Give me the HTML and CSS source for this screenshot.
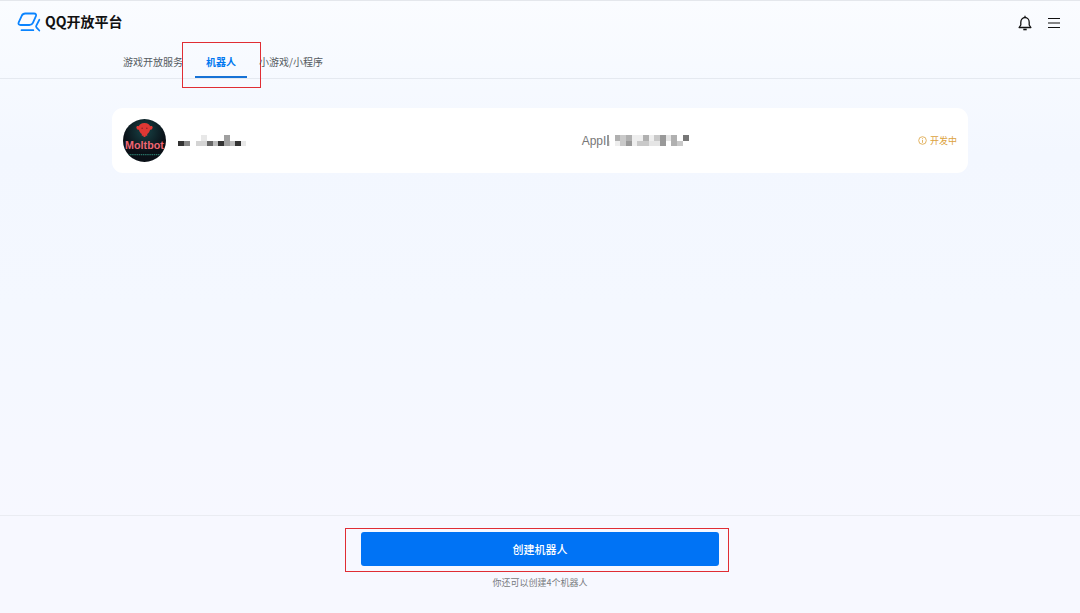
FILE: index.html
```html
<!DOCTYPE html>
<html lang="zh-CN">
<head>
    <meta charset="UTF-8">
    <meta name="viewport" content="width=device-width, initial-scale=1.0">
    <title>QQ开放平台</title>
    <link rel="stylesheet" href="styles.css">
</head>
<body>
    <header>
        <a class="logo" href="#">
            <svg width="24" height="20" viewBox="0 0 24 20" fill="none" stroke="#0a84ff" stroke-width="1.8" stroke-linecap="round" stroke-linejoin="round">
                <path d="M8.3 1.5h8.6c1.900 0 2.700 1.200 2 2.700l-3 6.600c-.7 1.500-2 2.200-3.600 2.200H3.600c-1.800 0-2.600-1.100-1.900-2.600l3-6.600c.7-1.600 1.900-2.300 3.600-2.300z"/>
                <path d="M4.500 18.200h11.800"/>
                <path d="M22.300 7.800l-3 5.900c-.4.800-.3 1.300.3 1.900l2.700 2.900"/>
            </svg>
            <span>QQ开放平台</span>
        </a>
        <div class="tools">
            <button type="button" aria-label="通知">
                <svg width="14" height="16" viewBox="0 0 14 16" fill="none" stroke="#111" stroke-width="1.3" stroke-linejoin="round">
                    <path d="M7 .8v1.5M2.800 10V7.200a4.200 4.700 0 0 1 8.400 0V10l1.700 2.500H1.100L2.800 10z"/>
                    <path d="M5.300 14.500h3.400" stroke-width="1.6"/>
                </svg>
            </button>
            <button type="button" aria-label="菜单">
                <svg width="12" height="12" viewBox="0 0 12 12" stroke="#111" stroke-width="1.2">
                    <path d="M0 1.500h12M0 6h12M0 10.500h12"/>
                </svg>
            </button>
        </div>
    </header>

    <nav class="tabs">
        <a class="tab" href="#">游戏开放服务</a>
        <a class="tab active" href="#">机器人<span class="mark"></span></a>
        <a class="tab" href="#">小游戏/小程序</a>
    </nav>

    <main>
        <div class="bot-card">
            <div class="bot-name">
                <svg class="avatar" width="43" height="43" viewBox="0 0 44 44" role="img" aria-label="Moltbot">
                    <defs>
                        <radialGradient id="glow" cx="50%" cy="28%" r="50%">
                            <stop offset="0" stop-color="#174346"/>
                            <stop offset="1" stop-color="#0a1017"/>
                        </radialGradient>
                        <clipPath id="round"><circle cx="22" cy="22" r="22"/></clipPath>
                    </defs>
                    <g clip-path="url(#round)">
                        <rect width="44" height="44" fill="url(#glow)"/>
                        <path d="M22 4c3.300 0 5.200 1.400 5.800 3.500 1.400-.7 2.800 0 2.500 1.500-.2 1.400-1.300 2.200-2.600 2.100-.4 2-1.500 3.300-2.900 4.300v1.800h-1.800v1.300h-2v-1.300h-1.800v-1.800c-1.400-1-2.500-2.300-2.900-4.300-1.300.1-2.400-.7-2.600-2.100-.3-1.500 1.100-2.200 2.500-1.500C16.800 5.400 18.700 4 22 4z" fill="#df3834"/>
                        <circle cx="19.600" cy="9.500" r=".8" fill="#8a2228"/>
                        <circle cx="24.400" cy="9.500" r=".8" fill="#8a2228"/>
                        <text x="22" y="31" text-anchor="middle" class="avatar-text">Moltbot</text>
                        <path d="M5 36.500h34" stroke="#287065" stroke-width="1.2" stroke-dasharray="1.5 .7"/>
                    </g>
                </svg>
                <svg width="70" height="12" viewBox="0 0 70 12" shape-rendering="crispEdges" aria-hidden="true">
                    <path fill="#333" d="M0 6h6v5H0zM40 6h6v5h-6zM57 6h6v5h-6z"/>
                    <path fill="#888" d="M6 6h6v5H6z"/>
                    <path fill="#666" d="M29 6h6v5h-6z"/>
                    <path fill="#a0a0a0" d="M46 0h6v11h-6z"/>
                    <path fill="#bbb" d="M35 6h5v5h-5zM52 6h5v5h-5z"/>
                    <path fill="#d4d4d4" d="M18 6h11v5H18z"/>
                    <path fill="#e8e8e8" d="M23 0h6v6h-6zM63 6h5v5h-5z"/>
                </svg>
            </div>
            <div class="bot-id">
                <span>AppI</span>
                <svg width="82" height="12" viewBox="0 0 82 12" shape-rendering="crispEdges" aria-hidden="true">
                    <path fill="#999" d="M0 0h2v11H0zM19 6h6v5h-6zM53 0h6v11h-6z"/>
                    <path fill="#e5e5e5" d="M2 6h1v5H2zM42 6h11v5H42zM59 0h5v6h-5z"/>
                    <path fill="#b0b0b0" d="M8 0h5v6H8zM19 0h6v6h-6zM36 0h6v6h-6zM64 0h6v11h-6z"/>
                    <path fill="#c9c9c9" d="M13 0h6v6h-6zM13 6h6v5h-6zM30 6h12v5H30zM47 0h6v6h-6zM70 6h6v5h-6z"/>
                    <path fill="#eee" d="M8 6h5v5H8zM25 0h11v6H25zM25 6h5v5h-5zM42 0h5v6h-5z"/>
                    <path fill="#777" d="M76 0h6v6h-6z"/>
                </svg>
            </div>
            <div class="bot-status">
                <svg width="9" height="9" viewBox="0 0 9 9" fill="none" stroke="#dca23d" stroke-width=".8">
                    <circle cx="4.500" cy="4.500" r="3.800"/>
                    <path d="M4.500 2.200v1M4.500 4v2.800"/>
                </svg>
                <span>开发中</span>
            </div>
        </div>
    </main>

    <footer>
        <div class="create-area">
            <button type="button" class="create">创建机器人</button>
        </div>
        <p>你还可以创建4个机器人</p>
    </footer>
</body>
</html>
```

FILE: styles.css
```css
* {
    box-sizing: border-box;
}

body {
    margin: 0;
    min-height: 100vh;
    display: flex;
    flex-direction: column;
    border-top: 1px solid #e4e7ec;
    background: linear-gradient(#fafcff, #f3f7ff 25%, #f4f8ff 50%, #f7f8ff 85%);
    color: #555a61;
    font-family: "Noto Sans CJK SC", sans-serif;
    font-size: 10px;
}

a {
    color: inherit;
    text-decoration: none;
}

button {
    border: none;
    padding: 0;
    font-family: inherit;
    cursor: pointer;
}

header {
    display: flex;
    align-items: center;
    justify-content: space-between;
    height: 42px;
    padding: 0 20px 0 17px;
}

.logo {
    display: flex;
    align-items: center;
    gap: 4px;
    color: #111;
    font-size: 14px;
    font-weight: 700;
    line-height: 18px;
}

.logo span {
    padding-bottom: 2px;
}

.tools {
    display: flex;
    gap: 16px;
    padding-top: 2px;
}

.tools button {
    display: flex;
    align-items: center;
    background: none;
}

.tabs {
    display: flex;
    gap: 1px;
    height: 36px;
    padding: 0 112px;
    border-bottom: 1px solid #e5e9f0;
}

.tab {
    position: relative;
    padding: 0 11px;
    line-height: 38px;
}

.tab.active {
    color: #0078f0;
    font-weight: 700;
    border-bottom: 2px solid #1672d6;
}

/* red frames around the steps to follow */
.mark {
    position: absolute;
    inset: -1px -14px -12px -13px;
    border: 1px solid #e02d34;
}

main {
    flex: 1;
    padding: 29px 112px;
}

.bot-card {
    display: grid;
    grid-template-columns: 55% 1fr auto;
    align-items: center;
    height: 65px;
    padding: 0 11px;
    border-radius: 11px;
    background: #fff;
}

.bot-name {
    display: flex;
    align-items: center;
    gap: 12px;
}

.avatar-text {
    fill: #ef6673;
    font-family: "Liberation Sans", sans-serif;
    font-size: 11px;
    font-weight: 700;
}

.bot-id {
    display: flex;
    align-items: center;
    gap: 1px;
    color: #777;
    font-family: "Liberation Sans", sans-serif;
    font-size: 12px;
}

.bot-status {
    display: flex;
    align-items: center;
    gap: 3px;
    color: #dca23d;
    font-size: 9px;
}

footer {
    display: flex;
    flex-direction: column;
    align-items: center;
    height: 98px;
    padding-top: 12px;
    border-top: 1px solid #eaecf2;
}

.create-area {
    width: 100%;
    max-width: 384px;
    margin-right: 6px;
    padding: 3px 9px 5px 15px;
    border: 1px solid #e02d34;
}

.create {
    display: block;
    width: 100%;
    height: 34px;
    border-radius: 3px;
    background: #0073f5;
    color: #fff;
    font-size: 11px;
    font-weight: 500;
}

footer p {
    margin: 4px 0 0;
    color: #777a80;
    font-size: 9px;
    line-height: 14px;
}
```
